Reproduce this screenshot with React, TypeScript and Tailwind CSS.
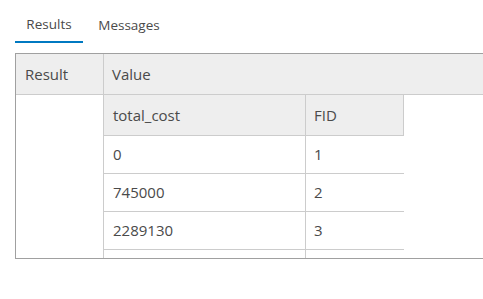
import React from "react"

const rows = [
  { cost: "0", fid: "1" },
  { cost: "745000", fid: "2" },
  { cost: "2289130", fid: "3" },
  { cost: "", fid: "" },
]

export default function App() {
  return (
    <div className="w-[483px] h-[299px] bg-white text-[#4a4a4a] overflow-hidden" style={{ fontFamily: "'Open Sans', 'Noto Sans', sans-serif" }}>
      {/* Tabs */}
      <div className="flex pl-[15px] pt-[7px] text-[13.5px]">
        <div className="w-[68px] h-[36px] flex items-center justify-center border-b-2 border-[#0079c1]">Results</div>
        <div className="w-[92px] h-[36px] flex items-center justify-center">Messages</div>
      </div>

      {/* Results table */}
      <div className="ml-[15px] mt-[10px] h-[206px] border-t border-l border-b border-[#a0a0a0] overflow-hidden text-[15px]">
        <div className="flex h-[41px] bg-[#eeeeee] border-b border-[#cccccc]">
          <div className="w-[88px] flex items-center pl-[9px] border-r border-[#cccccc]">Result</div>
          <div className="flex-1 flex items-center pl-[8px]">Value</div>
        </div>
        <div className="flex">
          <div className="w-[88px] h-[200px] border-r border-[#cccccc]" />
          <div className="w-[300px]">
            <div className="flex h-[41px] bg-[#eeeeee] border-b border-r border-[#cccccc]">
              <div className="w-[202px] flex items-center pl-[9px] border-r border-[#cccccc]">total_cost</div>
              <div className="flex-1 flex items-center pl-[8px]">FID</div>
            </div>
            {rows.map((r, i) => (
              <div key={i} className="flex h-[38px] border-b border-[#cccccc]">
                <div className="w-[202px] flex items-center pl-[9px] border-r border-[#cccccc]">{r.cost}</div>
                <div className="flex-1 flex items-center pl-[8px]">{r.fid}</div>
              </div>
            ))}
          </div>
        </div>
      </div>
    </div>
  )
}
